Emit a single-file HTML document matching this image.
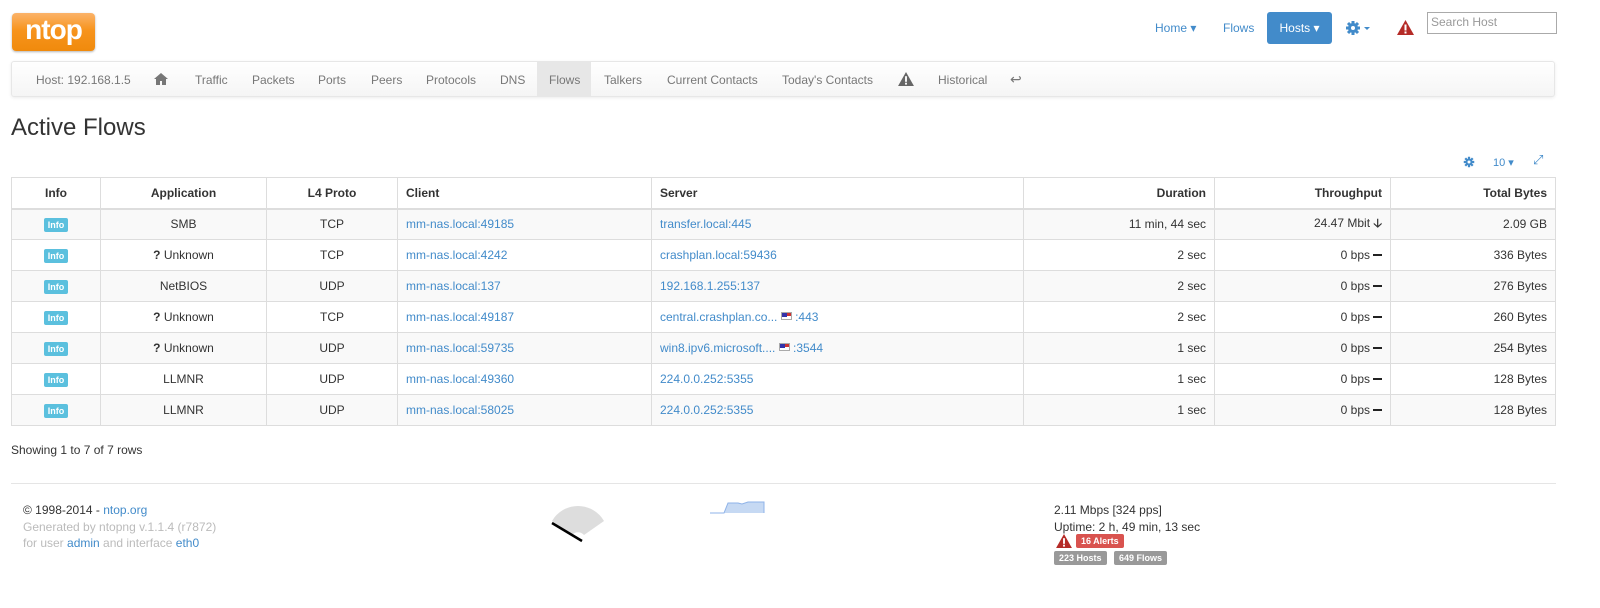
<!DOCTYPE html>
<html><head><meta charset="utf-8"><style>
*{box-sizing:border-box;margin:0;padding:0}
body{width:1600px;height:608px;background:#fff;font-family:"Liberation Sans",sans-serif;font-size:12px;color:#333;position:relative;overflow:hidden}
a{color:#428bca;text-decoration:none}
.abs{position:absolute}
.logo{left:12px;top:13px;width:83px;height:38px;border-radius:4px;background:linear-gradient(#fbb36a 0,#f7941d 45%,#f08a0c 100%);box-shadow:0 1px 2px rgba(0,0,0,.3);color:#fff;font-weight:bold;font-size:28px;line-height:34px;text-align:center;letter-spacing:-1px}
.topnav span{position:absolute;top:21px;color:#428bca;font-size:12px}
.hosts{left:1267px;top:12px;width:65px;height:32px;background:#428bca;border-radius:3px;color:#fff;line-height:32px;text-align:center}
.search{left:1427px;top:12px;width:130px;height:22px;border:1px solid #aaa;color:#999;padding:2px 3px;font-size:12px}
.subnav{left:11px;top:61px;width:1544px;height:36px;border:1px solid #e7e7e7;border-radius:3px;background:linear-gradient(#fff,#f5f5f5);box-shadow:0 1px 3px rgba(0,0,0,.08)}
.subnav span{position:absolute;top:11px;color:#777}
.flows{left:525px;top:0;width:54px;height:34px;background:#e7e7e7}
h1{position:absolute;left:11px;top:114px;font-size:24px;font-weight:normal;color:#333}
table{position:absolute;left:11px;top:177px;width:1545px;border-collapse:collapse}
td,th{border:1px solid #ddd;height:31px;padding:0 8px}
th{height:31px;font-weight:bold;border-bottom:2px solid #ddd}
tbody tr:nth-child(odd){background:#f9f9f9}
.c{text-align:center}.r{text-align:right}.l{text-align:left}
.lab{display:inline-block;background:#5bc0de;color:#fff;font-size:9px;font-weight:bold;padding:2px 4px;border-radius:2px}
.flag{display:inline-block;width:11px;height:8px;background:linear-gradient(#c33 0 50%,#fff 50%);vertical-align:1px;border:1px solid #aaa;position:relative}
.flag:before{content:"";position:absolute;left:0;top:0;width:5px;height:4px;background:#33a}
.dash{display:inline-block;width:9px;height:2.5px;background:#222;vertical-align:3px;margin-left:3px}
.foot{color:#bbb}
.badge{display:inline-block;color:#fff;font-size:9px;font-weight:bold;padding:2px 5px;border-radius:2px}
</style></head><body>
<div class="abs logo">ntop</div>
<div class="topnav">
<span style="left:1155px">Home ▾</span>
<span style="left:1223px">Flows</span>
</div>
<div class="abs hosts">Hosts ▾</div>
<svg class="abs" style="left:1345px;top:20px" width="28" height="16" viewBox="0 0 28 16"><g fill="#428bca"><circle cx="8" cy="8" r="5"/><g stroke="#428bca" stroke-width="3"><line x1="8" y1="1" x2="8" y2="15"/><line x1="1" y1="8" x2="15" y2="8"/><line x1="3" y1="3" x2="13" y2="13"/><line x1="13" y1="3" x2="3" y2="13"/></g><circle cx="8" cy="8" r="2" fill="#fff"/><path d="M19 7h6l-3 3z"/></g></svg>
<svg class="abs" style="left:1397px;top:20px" width="17" height="15" viewBox="0 0 17 15"><path d="M8.5 0L17 15H0z" fill="#b52b27"/><rect x="7.5" y="4.5" width="2" height="6" fill="#fff"/><rect x="7.5" y="11.5" width="2" height="2" fill="#fff"/></svg>
<div class="abs search">Search Host</div>
<div class="abs subnav">
<div class="abs flows"></div>
<span style="left:24px">Host: 192.168.1.5</span>
<svg class="abs" style="left:142px;top:11px" width="14" height="12" viewBox="0 0 14 12"><path d="M7 0L0 6h2v6h4V8h2v4h4V6h2z" fill="#777"/></svg>
<span style="left:183px">Traffic</span>
<span style="left:240px">Packets</span>
<span style="left:306px">Ports</span>
<span style="left:359px">Peers</span>
<span style="left:414px">Protocols</span>
<span style="left:488px">DNS</span>
<span style="left:537px">Flows</span>
<span style="left:592px">Talkers</span>
<span style="left:655px">Current Contacts</span>
<span style="left:770px">Today's Contacts</span>
<svg class="abs" style="left:886px;top:10px" width="16" height="14" viewBox="0 0 17 15"><path d="M8.5 0L17 15H0z" fill="#666"/><rect x="7.5" y="4.5" width="2" height="6" fill="#fff"/><rect x="7.5" y="11.5" width="2" height="2" fill="#fff"/></svg>
<span style="left:926px">Historical</span>
<span style="left:998px;top:9px;font-size:14px">↩</span>
</div>
<h1>Active Flows</h1>
<svg class="abs" style="left:1463px;top:156px" width="12" height="12" viewBox="0 0 16 16"><g fill="#428bca" stroke="#428bca" stroke-width="3"><line x1="8" y1="1" x2="8" y2="15"/><line x1="1" y1="8" x2="15" y2="8"/><line x1="3" y1="3" x2="13" y2="13"/><line x1="13" y1="3" x2="3" y2="13"/></g><circle cx="8" cy="8" r="4.5" fill="#428bca"/><circle cx="8" cy="8" r="2" fill="#fff"/></svg>
<span class="abs" style="left:1493px;top:156px;color:#428bca;font-size:11px">10 ▾</span>
<span class="abs" style="left:1533px;top:152px;color:#428bca;font-size:13px">⤢</span>
<table>
<colgroup><col style="width:89px"><col style="width:166px"><col style="width:131px"><col style="width:254px"><col style="width:372px"><col style="width:191px"><col style="width:176px"><col></colgroup>
<thead><tr><th class="c">Info</th><th class="c">Application</th><th class="c">L4 Proto</th><th class="l">Client</th><th class="l">Server</th><th class="r">Duration</th><th class="r">Throughput</th><th class="r">Total Bytes</th></tr></thead>
<tbody>
<tr><td class="c"><span class="lab">Info</span></td><td class="c">SMB</td><td class="c">TCP</td><td><a>mm-nas.local:49185</a></td><td><a>transfer.local:445</a></td><td class="r">11 min, 44 sec</td><td class="r">24.47 Mbit <b>🡣</b></td><td class="r">2.09 GB</td></tr>
<tr><td class="c"><span class="lab">Info</span></td><td class="c"><b>?</b> Unknown</td><td class="c">TCP</td><td><a>mm-nas.local:4242</a></td><td><a>crashplan.local:59436</a></td><td class="r">2 sec</td><td class="r">0 bps<span class="dash"></span></td><td class="r">336 Bytes</td></tr>
<tr><td class="c"><span class="lab">Info</span></td><td class="c">NetBIOS</td><td class="c">UDP</td><td><a>mm-nas.local:137</a></td><td><a>192.168.1.255:137</a></td><td class="r">2 sec</td><td class="r">0 bps<span class="dash"></span></td><td class="r">276 Bytes</td></tr>
<tr><td class="c"><span class="lab">Info</span></td><td class="c"><b>?</b> Unknown</td><td class="c">TCP</td><td><a>mm-nas.local:49187</a></td><td><a>central.crashplan.co... <span class="flag"></span> :443</a></td><td class="r">2 sec</td><td class="r">0 bps<span class="dash"></span></td><td class="r">260 Bytes</td></tr>
<tr><td class="c"><span class="lab">Info</span></td><td class="c"><b>?</b> Unknown</td><td class="c">UDP</td><td><a>mm-nas.local:59735</a></td><td><a>win8.ipv6.microsoft.... <span class="flag"></span> :3544</a></td><td class="r">1 sec</td><td class="r">0 bps<span class="dash"></span></td><td class="r">254 Bytes</td></tr>
<tr><td class="c"><span class="lab">Info</span></td><td class="c">LLMNR</td><td class="c">UDP</td><td><a>mm-nas.local:49360</a></td><td><a>224.0.0.252:5355</a></td><td class="r">1 sec</td><td class="r">0 bps<span class="dash"></span></td><td class="r">128 Bytes</td></tr>
<tr><td class="c"><span class="lab">Info</span></td><td class="c">LLMNR</td><td class="c">UDP</td><td><a>mm-nas.local:58025</a></td><td><a>224.0.0.252:5355</a></td><td class="r">1 sec</td><td class="r">0 bps<span class="dash"></span></td><td class="r">128 Bytes</td></tr>
</tbody></table>
<div class="abs" style="left:11px;top:443px">Showing 1 to 7 of 7 rows</div>
<div class="abs" style="left:11px;top:483px;width:1545px;border-top:1px solid #e5e5e5"></div>
<div class="abs" style="left:23px;top:502px;line-height:16.5px">© 1998-2014 - <a>ntop.org</a><br><span class="foot">Generated by ntopng v.1.1.4 (r7872)</span><br><span class="foot">for user </span><a>admin</a><span class="foot"> and interface </span><a>eth0</a></div>
<svg class="abs" style="left:548px;top:505px" width="60" height="40" viewBox="0 0 60 40"><path d="M4 16A30 30 0 0 1 56 16L36 30A8 8 0 0 0 24 30z" fill="#ddd"/><line x1="4" y1="18" x2="34" y2="36" stroke="#000" stroke-width="2.5"/></svg>
<svg class="abs" style="left:708px;top:496px" width="58" height="20" viewBox="0 0 58 20"><path d="M2 17H16L20 7H30L34 8L40 6H56V17H2Z" fill="#c6d9f3"/><path d="M2 17H16L20 7H30L34 8L40 6H56V17" fill="none" stroke="#8fb3e8"/></svg>
<div class="abs" style="left:1054px;top:502px;line-height:16.5px">2.11 Mbps [324 pps]<br>Uptime: 2 h, 49 min, 13 sec</div>
<svg class="abs" style="left:1056px;top:534px" width="16" height="14" viewBox="0 0 17 15"><path d="M8.5 0L17 15H0z" fill="#b52b27"/><rect x="7.5" y="4.5" width="2" height="6" fill="#fff"/><rect x="7.5" y="11.5" width="2" height="2" fill="#fff"/></svg>
<span class="abs badge" style="left:1076px;top:534px;background:#d9534f">16 Alerts</span>
<span class="abs badge" style="left:1054px;top:551px;background:#999">223 Hosts</span>
<span class="abs badge" style="left:1114px;top:551px;background:#999">649 Flows</span>
</body></html>
